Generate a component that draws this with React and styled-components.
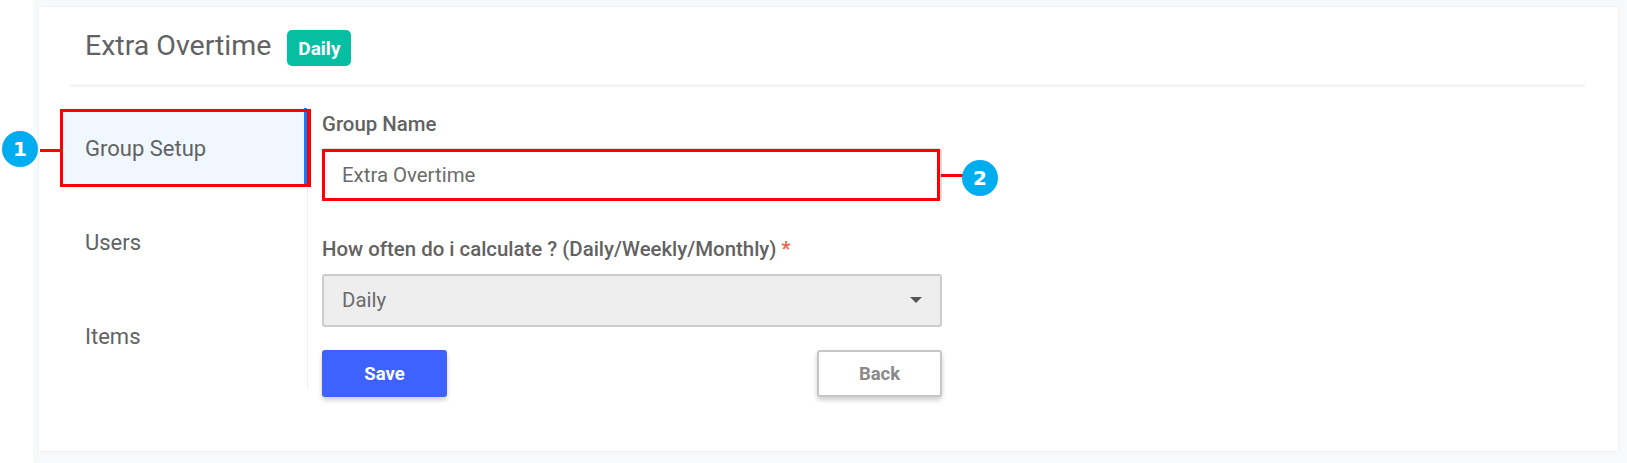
import React from "react";
import styled, { createGlobalStyle } from "styled-components";

const GlobalStyle = createGlobalStyle`
  html, body {
    margin: 0;
    padding: 0;
    background: #fff;
    font-family: Roboto, "Liberation Sans", sans-serif;
  }
  * { box-sizing: border-box; }
`;

const Page = styled.div`
  width: 1627px;
  height: 463px;
  padding-left: 33px;
  overflow: hidden;
`;

const Backdrop = styled.div`
  height: 100%;
  padding: 7px 9px 12px 6px;
  background: #f8f9fb;
`;

const Card = styled.div`
  height: 444px;
  padding: 0 33px 0 31px;
  background: #fff;
  box-shadow: 0 0 2px rgba(0, 0, 0, 0.1);
`;

const Header = styled.div`
  height: 80px;
  padding: 23px 0 0 15px;
  display: flex;
  align-items: flex-start;
  gap: 16px;
  border-bottom: 3px solid #f4f4f4;
`;

const Title = styled.h1`
  margin: 1px 0 0;
  font-size: 28.5px;
  line-height: 30px;
  font-weight: 400;
  color: #626262;
`;

const Badge = styled.span`
  height: 36px;
  width: 64px;
  display: flex;
  align-items: center;
  justify-content: center;
  border-radius: 5px;
  background: #06bfa2;
  color: #fff;
  font-size: 19px;
  font-weight: 700;
`;

const Content = styled.div`
  display: flex;
  padding-top: 21px;
`;

const Sidebar = styled.nav`
  width: 245px;
  height: 282px;
  margin-left: -7px;
  border-right: 1px solid #f1f1f1;
`;

const NavItem = styled.div`
  position: relative;
  height: 77px;
  margin-bottom: 17px;
  padding: 4px 0 0 22px;
  display: flex;
  align-items: center;
  font-size: 22px;
  color: #626262;
  background: ${props => (props.active ? "#f0f7ff" : "transparent")};
  border-right: ${props => (props.active ? "3px solid #0a7cff" : "none")};
`;

const Form = styled.div`
  width: 620px;
  margin-left: 14px;
  padding-top: 4px;
  display: flex;
  flex-direction: column;
`;

const Label = styled.label`
  display: block;
  height: 24px;
  font-size: 20.4px;
  line-height: 24px;
  font-weight: 500;
  color: #626262;
`;

const Required = styled.span`
  color: #f0604a;
`;

const Field = styled.div`
  position: relative;
  height: 53px;
  margin-top: 12px;
  margin-bottom: 36px;
  padding: 0 18px 0 18px;
  display: flex;
  align-items: center;
  justify-content: space-between;
  border-radius: 3px;
  border: 2px solid ${props => (props.disabled ? "#cccccc" : "#dfdfdf")};
  background: ${props => (props.disabled ? "#eeeeee" : "#fff")};
  font-size: 20.4px;
  color: #6b6b6b;
`;

const SelectField = styled(Field)`
  margin-top: 13px;
  margin-bottom: 23px;
  padding-bottom: 1px;
`;

const Caret = styled.span`
  width: 0;
  height: 0;
  border-left: 6px solid transparent;
  border-right: 6px solid transparent;
  border-top: 6px solid #555;
`;

const Buttons = styled.div`
  display: flex;
  justify-content: space-between;
`;

const Button = styled.button`
  width: 125px;
  height: 47px;
  padding: 0;
  border-radius: 3px;
  font-family: inherit;
  font-size: 18.5px;
  font-weight: 700;
  box-shadow: 0 3px 5px rgba(0, 0, 0, 0.2);
  color: ${props => (props.primary ? "#fff" : "#8a8a8a")};
  background: ${props => (props.primary ? "#3e62ff" : "#fff")};
  border: ${props => (props.primary ? "none" : "2px solid #c6c6c6")};
`;

/* red annotation drawn on top of the screenshot */
const Highlight = styled.div`
  position: absolute;
  top: ${props => props.top}px;
  left: ${props => props.left}px;
  right: ${props => props.right}px;
  bottom: ${props => props.bottom}px;
  border: 3px solid #ff0000;
`;

const NavHighlight = styled(Highlight)`
  border-right-width: 4px;
`;

const Leader = styled.div`
  position: absolute;
  top: ${props => props.top}px;
  left: ${props => props.left}px;
  width: 22px;
  height: 3px;
  background: #ff0000;
`;

const Marker = styled.div`
  position: absolute;
  top: ${props => props.top}px;
  left: ${props => props.left}px;
  width: 36px;
  height: 36px;
  border-radius: 50%;
  background: #00aeef;
  color: #fff;
  display: flex;
  align-items: center;
  justify-content: center;
  font-family: "DejaVu Sans", sans-serif;
  font-size: 20px;
  font-weight: 700;
`;

export default function App() {
  return (
    <Page>
      <GlobalStyle />
      <Backdrop>
        <Card>
          <Header>
            <Title>Extra Overtime</Title>
            <Badge>Daily</Badge>
          </Header>
          <Content>
            <Sidebar>
              <NavItem active>
                Group Setup
                <NavHighlight top={1} left={-3} right={-7} bottom={-2} />
                <Leader top={41} left={-23} />
                <Marker top={23} left={-61}>1</Marker>
              </NavItem>
              <NavItem>Users</NavItem>
              <NavItem>Items</NavItem>
            </Sidebar>
            <Form>
              <Label>Group Name</Label>
              <Field>
                Extra Overtime
                <Highlight top={-1} left={-2} right={0} bottom={-2} />
                <Leader top={24} left={617} />
                <Marker top={10} left={638}>2</Marker>
              </Field>
              <Label>
                How often do i calculate ? (Daily/Weekly/Monthly) <Required>*</Required>
              </Label>
              <SelectField disabled>
                Daily
                <Caret />
              </SelectField>
              <Buttons>
                <Button primary>Save</Button>
                <Button>Back</Button>
              </Buttons>
            </Form>
          </Content>
        </Card>
      </Backdrop>
    </Page>
  );
}
